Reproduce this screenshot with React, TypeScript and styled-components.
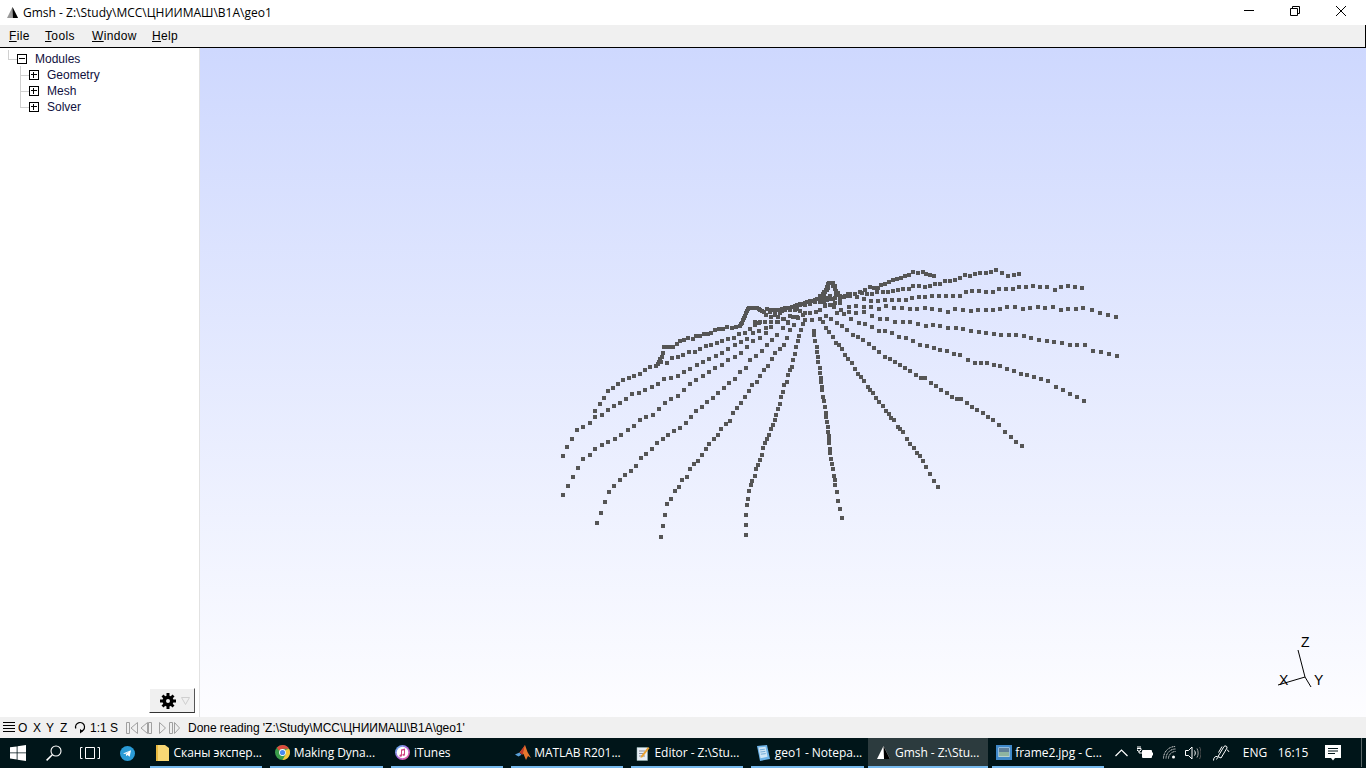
import styled, {createGlobalStyle} from "styled-components";
import type {ReactNode} from "react";

const GlobalStyle = createGlobalStyle`
    html, body {
        margin: 0;
        padding: 0;
        overflow: hidden;
    }
    * {
        box-sizing: border-box;
    }
`

const Page = styled.div`
    width: 1366px;
    height: 768px;
    display: flex;
    flex-direction: column;
    background: #fff;
    font-family: "Liberation Sans", Arial, sans-serif;
    font-size: 12px;
    color: #000;
`

const TitleBar = styled.div`
    height: 25px;
    flex: none;
    display: flex;
    align-items: center;
    padding-left: 7px;
    background: #fff;
`

const TitleText = styled.span`
    margin-left: 5px;
    font-family: "Open Sans", sans-serif;
    font-size: 12px;
    white-space: nowrap;
`

const WindowControls = styled.div`
    margin-left: auto;
    padding-right: 2px;
    display: flex;
`

const WindowButton = styled.div`
    width: 46px;
    height: 25px;
    display: flex;
    align-items: center;
    justify-content: center;
    padding-bottom: 4px;
`

const MenuBar = styled.div`
    height: 23px;
    flex: none;
    display: flex;
    align-items: center;
    padding: 0 0 1px 9px;
    background: #f0f0f0;
    border-bottom: 1px solid #000;
    border-right: 1px solid #000;
`

const MenuItem = styled.span<{ $width: number }>`
    width: ${p => p.$width}px;
    letter-spacing: 0.35px;
    u {
        text-underline-offset: 1px;
    }
`

const Main = styled.div`
    flex: 1;
    min-height: 0;
    display: flex;
`

const Sidebar = styled.aside`
    width: 200px;
    flex: none;
    display: flex;
    flex-direction: column;
    padding: 3px 4px 4px 0;
    background: #fff;
    border-right: 1px solid #e2e2e2;
`

const TreeRow = styled.div<{ $level: number }>`
    height: 16px;
    display: flex;
    align-items: center;
    padding-left: ${p => (p.$level === 0 ? 17 : 29)}px;
    color: #101040;
    white-space: nowrap;
`

const ToggleBox = styled.span<{ $elbow: number }>`
    position: relative;
    width: 10px;
    height: 10px;
    flex: none;
    margin-right: 8px;
    border: 1px solid #000;
    background: #fff;

    /* the dotted tree connector going into the box */
    &::before {
        content: "";
        position: absolute;
        right: 9px;
        bottom: 3px;
        width: 8px;
        height: ${p => p.$elbow}px;
        border-left: 1px solid #d0d0d0;
        border-bottom: 1px solid #d0d0d0;
    }
    &::after {
        content: "";
        position: absolute;
        left: 1px;
        top: 3px;
        width: 6px;
        height: 2px;
        border-top: 1px solid #000;
    }
`

const PlusBar = styled.span`
    position: absolute;
    left: 3px;
    top: 1px;
    height: 6px;
    border-left: 1px solid #000;
`

const GearButton = styled.button`
    width: 46px;
    height: 25px;
    margin-top: auto;
    align-self: flex-end;
    display: flex;
    align-items: center;
    padding: 0 0 0 10px;
    gap: 5px;
    background: #f0f0f0;
    border: none;
    border-top: 1px solid #fff;
    border-left: 1px solid #fff;
    border-right: 1px solid #555;
    border-bottom: 1px solid #333;
`

const Canvas = styled.div`
    position: relative;
    flex: 1;
    background: linear-gradient(180deg, #ced8fe 0%, #fdfdff 100%);
`

const Cloud = styled.svg`
    display: block;
    width: 100%;
    height: 100%;
`

const StatusBar = styled.div`
    height: 21px;
    flex: none;
    display: flex;
    align-items: center;
    padding-left: 3px;
    background: #f0f0f0;
`

const StatusCell = styled.span<{ $width: number }>`
    width: ${p => p.$width}px;
    flex: none;
    display: flex;
    align-items: center;
`

const StatusMessage = styled.span`
    margin-left: 6px;
    letter-spacing: -0.04px;
    white-space: nowrap;
`

const Taskbar = styled.div`
    height: 30px;
    flex: none;
    display: flex;
    align-items: stretch;
    background: #001519;
    color: #fff;
`

const TaskIcon = styled.div<{ $width: number }>`
    width: ${p => p.$width}px;
    flex: none;
    display: flex;
    align-items: center;
    justify-content: center;
`

const TaskButton = styled.div<{ $active?: boolean }>`
    position: relative;
    width: 120.25px;
    flex: none;
    display: flex;
    align-items: center;
    gap: 3.5px;
    padding: 0 0 1px 8px;
    background: ${p => (p.$active ? "#2c3b3e" : "transparent")};
    font-family: "Open Sans", sans-serif;
    font-size: 12px;
    letter-spacing: -0.05px;
    white-space: nowrap;

    &::after {
        content: "";
        position: absolute;
        left: ${p => (p.$active ? 0 : 4)}px;
        right: ${p => (p.$active ? 0 : 4)}px;
        bottom: 0;
        height: 2px;
        background: #76b9ed;
    }
`

const TaskGlyph = styled.span`
    width: 16px;
    flex: none;
    display: flex;
    justify-content: center;
`

const Tray = styled.div`
    margin-left: auto;
    display: flex;
    align-items: center;
    padding-bottom: 1px;
`

const TrayItem = styled.div<{ $width: number }>`
    width: ${p => p.$width}px;
    flex: none;
    display: flex;
    align-items: center;
    justify-content: center;
    font-family: "Open Sans", sans-serif;
    font-size: 12px;
`

const ShowDesktop = styled.div`
    width: 5px;
    height: 100%;
    flex: none;
    margin-left: 8px;
    border-left: 1px solid #5a6668;
`

// point cloud traced from the reference, one array per spoke, as x,y pairs in 3x crop coordinates
const leftCrop = {x: 550, y: 260}
const rightCrop = {x: 820, y: 260}

const leftSpokes: number[][] = [
    [39,588,51,561,66,537,81,510,99,501,120,489,135,471,135,453,150,432,162,414,174,393,189,384,204,372,219,360,237,354,252,348,270,342,285,330,300,321,318,318,324,312,333,306,330,297,339,279,345,261,357,261,369,261,381,252,390,243,402,240,414,234,429,237,438,228,450,228,462,222,474,222,483,219,495,210,507,207,519,207,531,201,546,204,558,201,570,198,576,189,582,174,588,159,594,147,603,144,621,144,630,150,642,156,651,147,663,150,675,153,690,150,705,144,720,144,735,138,750,132,765,129,780,123,795,120,810,114,822,102,831,90,834,72,846,69,855,87,864,102,876,111,894,102],
    [135,471,156,465,174,450,192,438,210,429,228,417,246,402,267,399,285,390,306,381,324,372,342,357,363,354,384,348,402,336,420,327,441,315,459,306,477,297,498,288,516,279,534,267,555,255,573,246,591,237,609,243,630,234,648,219,663,201,681,186,699,177],
    [39,705,54,678,69,651,84,624,99,597,120,585,135,567,156,555,174,546,195,537,213,525,234,510,252,498,270,480,288,471,309,465,327,447,345,429,363,417,384,408,402,390,420,372,438,360,459,348,477,336,495,324,516,315,534,300,555,291,573,279,591,261,609,219,627,213,648,204,663,186],
    [333,306,351,309,366,294,384,291,399,285,417,276,435,276,450,267,468,258,483,255,501,249,516,243,534,237,552,234,567,222,585,219,600,207,615,195,627,189,645,186,663,171],
    [141,789,153,759,165,726,177,696,192,678,210,660,225,645,243,633,258,618,273,594,288,582,306,567,321,549,339,537,354,525,372,513,390,504,408,489,423,471,438,453,456,441,471,426,489,414,504,399,522,384,537,369,555,357,570,336,588,324,600,300,618,288,636,273,651,255,666,240,681,225,699,204,714,189,729,171],
    [333,831,339,798,345,765,351,732,363,717,375,693,387,681,396,660,411,651,420,627,432,612,444,603,456,585,468,567,477,552,492,537,504,525,513,507,528,492,540,483,549,459,561,444,573,429,585,411,597,393,606,375,621,366,630,348,642,330,654,318,666,297,675,279,690,267,702,255,711,234,720,210,732,195,744,174],
    [588,825,588,795,588,765,591,735,594,717,597,693,603,675,606,663,615,648,618,627,624,615,630,600,636,585,639,564,645,549,651,537,657,525,663,507,669,495,675,480,678,465,684,447,690,432,693,411,699,396,702,375,711,366,714,345,720,330,726,321,729,300,735,282,738,261,744,243,747,228,753,210,759,192,765,180],
    [876,774,870,747,864,723,861,696,855,675,855,660,852,648,849,627,846,612,843,597,840,579,840,567,837,549,837,540,837,528,834,516,834,501,831,486,828,471,828,459,825,441,822,423,819,411,816,390,816,381,813,366,813,354,810,339,810,324,804,306,804,291,801,276,801,261,795,243,792,225,792,213,786,180],
    // the knot in the middle
    [735,138,741,147,750,153,765,159,780,159,798,156,810,150,825,138,840,135,855,129,870,120,885,108,660,156,675,156,690,159,684,171,684,186,702,177,714,186,720,168,741,171,759,165,648,165,630,186,615,186,720,150,735,150,750,135,765,135,780,132,795,126,810,126,825,120,840,117,855,114,675,165,696,153,705,150],
    // the thick ridge, points so close that they join up
    [573,192,579,180,585,168,591,153,597,144,612,144,627,147,636,153,669,150,682,150,697,147,712,144,727,141,742,135,757,132,772,126,787,122,802,117,816,108,826,96,832,81,840,69,849,78,858,93,870,108,885,108,342,261,351,261,363,261,327,306,336,291],
]

const rightSpokes: number[][] = [
    [354,681,342,663,330,642,318,621,309,603,300,588,291,579,282,564,270,552,261,537,249,516,240,507,234,501,222,480,213,474,207,462,198,453,189,438,177,426,168,414,159,399,150,390,144,381,132,363,123,351,114,342,105,327,96,309,84,297,75,285,66,267,57,255,48,249,39,231,27,216,18,204,9,186,0,177],
    [606,558,588,546,573,531,555,516,537,495,519,480,504,471,489,459,471,450,456,441,441,429,423,417,411,417,396,411,381,399,363,390,348,378,333,369,315,354,303,354,288,345,270,333,255,324,240,315,225,306,210,297,195,291,177,276,162,264,147,252,129,240,114,231,99,225,81,210,66,198,51,189,33,177,18,168],
    [792,423,771,411,750,402,729,390,708,381,684,363,663,357,642,351,621,345,603,342,582,333,561,327,540,318,522,315,501,309,483,309,465,309,444,300,420,285,402,282,381,273,360,270,342,264,321,258,300,255,279,243,258,234,237,231,216,219,195,213,177,213,156,201,135,192,117,189,93,177,72,162,51,159],
    [891,288,867,282,843,276,819,273,795,255,771,255,750,255,726,249,702,246,681,243,657,240,633,234,612,228,588,225,567,225,543,225,522,222,498,219,477,216,453,213,429,207,408,204,384,204,360,198,339,195,318,198,294,192,270,186,249,186,225,186,201,177,180,177,156,168,132,156,108,159,87,156,63,150,42,141],
    [888,171,864,165,840,159,816,150,789,144,768,147,744,147,723,150,699,141,675,144,654,141,630,144,609,147,585,141,561,141,540,147,519,150,498,150,474,150,453,153,429,150,405,147,384,156,360,150,336,147,315,144,291,147,270,147,246,144,222,144,198,138,177,147,153,141,132,141,108,138,87,141,60,129,39,135],
    [786,84,765,81,744,78,723,81,705,90,681,81,660,81,639,78,618,81,597,81,579,87,558,87,537,87,519,96,498,96,477,93,456,93,438,96,420,108,399,108,378,108,357,108,336,108,315,111,297,111,276,114,258,120,237,120,216,120,195,120,174,123,153,123,132,117,111,111,90,108],
    [597,42,582,45,564,48,546,39,528,30,513,36,498,39,480,39,465,42,450,48,435,45,420,54,405,60,390,63,375,63,360,72,345,72,330,78,315,81,297,78,279,78,267,87,249,87,234,90,219,93,204,96,189,96,171,96,156,102,141,102,126,99],
    [342,48,330,45,318,42,309,36,294,39,279,36,267,45,255,48,243,54,231,57,219,60,207,66,195,72,183,75,174,84,162,84,150,81,135,90,120,96,105,102,90,102,72,111,54,99,45,78,39,69,27,69,18,90,9,102,0,108,0,120,20,120,40,118,60,114,80,108,15,135,30,135,12,126,12,96,24,84,30,69,48,105,60,108,30,108,20,114,10,114],
]

const toPoints = (spokes: number[][], crop: { x: number, y: number }) =>
    spokes.flatMap(spoke => {
        const points = [];
        for (let i = 0; i < spoke.length; i += 2) {
            points.push([Math.round(spoke[i] / 3) + crop.x, Math.round(spoke[i + 1] / 3) + crop.y]);
        }
        return points;
    })

const cloudPoints = [...toPoints(leftSpokes, leftCrop), ...toPoints(rightSpokes, rightCrop)]

const GmshLogo = ({size = 11, light = "#9a9a9a", dark = "#000"}: { size?: number, light?: string, dark?: string }) => (
    <svg width={size} height={size} viewBox="0 0 12 12">
        <polygon points="6,0 12,12 0,12" fill={light}/>
        <polygon points="6,0 12,12 6.5,12" fill={dark}/>
    </svg>
)

const GearIcon = () => (
    <svg width="16" height="16" viewBox="0 0 16 16" fill="#000">
        <path d="M6.5 0h3v3h-3zM6.5 13h3v3h-3zM0 6.500h3v3H0zM13 6.500h3v3h-3zM1.500 3.500l2-2 2.500 2.500-2 2zM10 4l2.500-2.500 2 2-2.500 2.500zM1.500 12.500l2.500-2.500 2 2-2.500 2.500zM10 12l2-2 2.500 2.500-2 2z"/>
        <path fillRule="evenodd" d="M8 2.500a5.500 5.500 0 1 1 0 11 5.500 5.500 0 0 1 0-11zM8 6a2 2 0 1 0 0 4 2 2 0 0 0 0-4z"/>
    </svg>
)

const HamburgerIcon = () => (
    <svg width="12" height="11" viewBox="0 0 12 11" stroke="#000">
        <path d="M0 .5h12M0 3.500h12M0 6.500h12M0 9.500h12"/>
    </svg>
)

const RotateIcon = () => (
    <svg width="12" height="13" viewBox="0 0 12 13" fill="none" stroke="#000" strokeWidth="1.2">
        <path d="M6 10.500a4.500 4.500 0 1 0-4.200-3"/>
        <path d="M6 8v4.500l3-2.200z" fill="#000" stroke="none"/>
    </svg>
)

const NavIcons = () => (
    <svg width="54" height="14" viewBox="0 0 54 14" fill="none" stroke="#a0a0a0">
        <path d="M.5 1.500h3v11h-3zM11.500 1.500v11l-6.500-5.500z"/>
        <path d="M21.500 1.500v11l-6.500-5.500zM22.500 1.500h3v11h-3z"/>
        <path d="M33.500 1.500v11l6-5.500z"/>
        <path d="M43.500 1.500h3v11h-3zM48.500 1.500v11l5-5.500z"/>
    </svg>
)

const WindowsLogo = () => (
    <svg width="16" height="16" viewBox="0 0 16 16" fill="#fff">
        <path d="M0 2.300l6.700-.9v6.100H0zM7.500 1.300L16 0v7.500H7.500zM0 8.300h6.700v6.200L0 13.600zM7.500 8.300H16V16l-8.500-1.200z"/>
    </svg>
)

const SearchIcon = () => (
    <svg width="16" height="16" viewBox="0 0 16 16" fill="none" stroke="#fff" strokeWidth="1.1">
        <circle cx="10" cy="6" r="5"/>
        <path d="M6.300 9.700L.6 15.400" strokeWidth="1.500"/>
    </svg>
)

const TaskViewIcon = () => (
    <svg width="20" height="12" viewBox="0 0 20 12" fill="none" stroke="#fff">
        <path d="M5.500.5h9v11h-9zM2.500.5h-2v11h2M17.500.5h2v11h-2"/>
    </svg>
)

const TelegramIcon = () => (
    <svg width="15" height="15" viewBox="0 0 15 15">
        <circle cx="7.500" cy="7.500" r="7.500" fill="#2a9bd6"/>
        <path d="M3 7.400l8-3.100-1.300 6.500-2.300-1.700-1.200 1.200-.3-2.200 3.300-2.700-4.100 2.500z" fill="#fff"/>
    </svg>
)

const FolderIcon = () => (
    <svg width="13" height="16" viewBox="0 0 13 16">
        <path d="M0 0h9l4 3v13H0z" fill="#f7d774"/>
        <path d="M0 0h2v16H0z" fill="#e8b93f"/>
    </svg>
)

const ChromeIcon = () => (
    <svg width="15" height="15" viewBox="0 0 15 15">
        <circle cx="7.500" cy="7.500" r="7.500" fill="#3a9d4a"/>
        <path d="M7.500 0a7.500 7.500 0 0 1 6.500 3.750H7.500L3.800 5.500 1.900 2.600A7.500 7.500 0 0 1 7.500 0z" fill="#dd4b3e"/>
        <path d="M14 3.750A7.500 7.500 0 0 1 7.500 15l3-5.200V5z" fill="#f5c63c"/>
        <circle cx="7.500" cy="7.500" r="3.400" fill="#fff"/>
        <circle cx="7.500" cy="7.500" r="2.600" fill="#4a8af0"/>
    </svg>
)

const ItunesIcon = () => (
    <svg width="15" height="15" viewBox="0 0 15 15">
        <defs>
            <linearGradient id="itunesRing" x1="0" y1="0" x2="1" y2="1">
                <stop offset="0" stopColor="#4cc0f0"/>
                <stop offset=".5" stopColor="#b06be0"/>
                <stop offset="1" stopColor="#f0508a"/>
            </linearGradient>
        </defs>
        <circle cx="7.500" cy="7.500" r="7.500" fill="url(#itunesRing)"/>
        <circle cx="7.500" cy="7.500" r="5.800" fill="#fff"/>
        <path d="M6 4.500l4-1v6.300a1.300 1.100 0 1 1-1-1.100V5.200l-2 .5v5a1.300 1.100 0 1 1-1-1.100z" fill="#d0457f"/>
    </svg>
)

const MatlabIcon = () => (
    <svg width="16" height="16" viewBox="0 0 16 16">
        <path d="M0 9.500l4.500-2 2 2.200-3 1.800z" fill="#5aa0d8"/>
        <path d="M4.500 7.500L8 3l2-3 2.500 7 3.500 6-3-2-2 4-2.500-6z" fill="#e8772e"/>
        <path d="M8 3L4.500 7.500l3 2.500L10 0z" fill="#c0392b"/>
    </svg>
)

const EditorIcon = () => (
    <svg width="14" height="16" viewBox="0 0 14 16">
        <path d="M1 2.500h10.500v13H1z" fill="#e8eef5" stroke="#9bb" strokeWidth=".5"/>
        <path d="M3 6h6M3 8.500h5M3 11h6" stroke="#778" strokeWidth=".8"/>
        <path d="M5 11l7-9 1.500 1.200-7 9-2 .6z" fill="#e8a030"/>
    </svg>
)

const NotepadIcon = () => (
    <svg width="13" height="16" viewBox="0 0 13 16">
        <path d="M0 1l10-1 3 14-10 2z" fill="#6db3e8"/>
        <path d="M1.500 2.500l7-.7 2 10-7 1.500z" fill="#cfe6f7"/>
        <path d="M2.800 4.800l5-.6M3.300 7l5-.6M3.800 9.200l5-.6" stroke="#4a90c8" strokeWidth=".7"/>
    </svg>
)

const PictureIcon = () => (
    <svg width="16" height="15" viewBox="0 0 16 15">
        <path d="M0 0h16v15H0z" fill="#3f88c8"/>
        <path d="M2.500 2.500h11v9.500h-11z" fill="#e4eef5"/>
        <path d="M3 3h10v4H3z" fill="#5f7f98"/>
        <path d="M3 7h10v4.500H3z" fill="#8fb4a0"/>
    </svg>
)

const ChevronIcon = () => (
    <svg width="13" height="8" viewBox="0 0 13 8" fill="none" stroke="#fff" strokeWidth="1.200">
        <path d="M.5 7l6-6 6 6"/>
    </svg>
)

const BatteryIcon = () => (
    <svg width="16" height="13" viewBox="0 0 16 13" fill="none" stroke="#fff">
        <path d="M5.500 4.500h9v7h-9zM15.500 6.500v3"/>
        <path d="M6 5h8v6H6z" fill="#fff" stroke="none"/>
        <path d="M1 0v2.500M3 0v2.500M0 2.500h4V4l-1 1H1L0 4zM2 5v2h3.500"/>
    </svg>
)

const WifiIcon = () => (
    <svg width="13" height="13" viewBox="0 0 13 13" fill="none" stroke="#ccc" strokeDasharray="1.200 .5">
        <path d="M.5 12.500C.5 6 5.500 .5 12.500 .5"/>
        <path d="M3 12.500c0-5 4-9.500 9.500-9.500"/>
        <path d="M5.500 12.500c0-3.500 3-7 7-7"/>
        <circle cx="10.500" cy="11" r="1.500" fill="#fff" stroke="none"/>
    </svg>
)

const VolumeIcon = () => (
    <svg width="16" height="14" viewBox="0 0 16 14" fill="none" stroke="#fff">
        <path d="M.5 4.500h3l3.500-3.500v12l-3.500-3.500h-3z"/>
        <path d="M9.500 4.500c1 1.500 1 3.500 0 5"/>
        <path d="M12 2.500c1.500 2.500 1.500 6.500 0 9" stroke="#aaa"/>
        <path d="M14.500 1c2 3.500 2 8.500 0 12" stroke="#555"/>
    </svg>
)

const PenIcon = () => (
    <svg width="17" height="16" viewBox="0 0 17 16" fill="none" stroke="#fff">
        <path d="M5 11.500L11 1.500c1-1.200 3.500-.5 3 1.500L8 13z"/>
        <path d="M9 1.500l-3.500 6M14 5c1.500.5 2 1 1.500 2"/>
        <path d="M.5 15.500c0-3 2-4.500 3.500-4 2 .5 0 3-1 2.500"/>
    </svg>
)

const NotificationIcon = () => (
    <svg width="16" height="16" viewBox="0 0 16 16">
        <path d="M0 0h16v13H10l-2 2.500L6 13H0z" fill="#fff"/>
        <path d="M3 3.500h10M3 6h10M3 8.500h7" stroke="#001519"/>
    </svg>
)

const TASKS: { icon: ReactNode, label: string, active?: boolean }[] = [
    {icon: <FolderIcon/>, label: "Сканы экспер..."},
    {icon: <ChromeIcon/>, label: "Making Dyna..."},
    {icon: <ItunesIcon/>, label: "iTunes"},
    {icon: <MatlabIcon/>, label: "MATLAB R201..."},
    {icon: <EditorIcon/>, label: "Editor - Z:\\Stu..."},
    {icon: <NotepadIcon/>, label: "geo1 - Notepa..."},
    {icon: <GmshLogo size={13} light="#fff"/>, label: "Gmsh - Z:\\Stu...", active: true},
    {icon: <PictureIcon/>, label: "frame2.jpg - C..."},
]

const MODULES = ["Geometry", "Mesh", "Solver"]

const App = () => (
    <Page>
        <GlobalStyle/>
        <TitleBar>
            <GmshLogo/>
            <TitleText>Gmsh - Z:\Study\MCC\ЦНИИМАШ\B1A\geo1</TitleText>
            <WindowControls>
                <WindowButton>
                    <svg width="10" height="1" viewBox="0 0 10 1"><path d="M0 .5h10" stroke="#000"/></svg>
                </WindowButton>
                <WindowButton>
                    <svg width="10" height="10" viewBox="0 0 10 10" fill="none" stroke="#000">
                        <path d="M.5 2.500h7v7h-7zM2.500 2.500v-2h7v7h-2"/>
                    </svg>
                </WindowButton>
                <WindowButton>
                    <svg width="10" height="10" viewBox="0 0 10 10" stroke="#000"><path d="M0 0l10 10M10 0L0 10"/></svg>
                </WindowButton>
            </WindowControls>
        </TitleBar>
        <MenuBar>
            <MenuItem $width={36}><u>F</u>ile</MenuItem>
            <MenuItem $width={47}><u>T</u>ools</MenuItem>
            <MenuItem $width={60}><u>W</u>indow</MenuItem>
            <MenuItem $width={40}><u>H</u>elp</MenuItem>
        </MenuBar>
        <Main>
            <Sidebar>
                <TreeRow $level={0}>
                    <ToggleBox $elbow={9}/>
                    Modules
                </TreeRow>
                {MODULES.map((name, i) => (
                    <TreeRow key={name} $level={1}>
                        <ToggleBox $elbow={i === 0 ? 9 : 16}><PlusBar/></ToggleBox>
                        {name}
                    </TreeRow>
                ))}
                <GearButton>
                    <GearIcon/>
                    <svg width="9" height="8" viewBox="0 0 9 8" fill="none" stroke="#cfcfcf">
                        <path d="M.5.500h8L4.500 7.500z"/>
                    </svg>
                </GearButton>
            </Sidebar>
            <Canvas>
                <Cloud viewBox="200 48 1166 669">
                    {cloudPoints.map(([x, y], i) => (
                        <rect key={i} x={x - 2} y={y - 2} width="4" height="4" fill="#555"/>
                    ))}
                    <path d="M1298 650l7 27M1305 677l-27 8M1305 677l6 10" stroke="#000" fill="none"/>
                    <text x="1301" y="647" fontFamily="Liberation Sans" fontSize="14">Z</text>
                    <text x="1279" y="685" fontFamily="Liberation Sans" fontSize="14">X</text>
                    <text x="1314" y="685" fontFamily="Liberation Sans" fontSize="14">Y</text>
                </Cloud>
            </Canvas>
        </Main>
        <StatusBar>
            <StatusCell $width={15}><HamburgerIcon/></StatusCell>
            <StatusCell $width={15}>O</StatusCell>
            <StatusCell $width={13}>X</StatusCell>
            <StatusCell $width={14}>Y</StatusCell>
            <StatusCell $width={14}>Z</StatusCell>
            <StatusCell $width={16}><RotateIcon/></StatusCell>
            <StatusCell $width={20}>1:1</StatusCell>
            <StatusCell $width={16}>S</StatusCell>
            <StatusCell $width={56}><NavIcons/></StatusCell>
            <StatusMessage>Done reading 'Z:\Study\MCC\ЦНИИМАШ\B1A\geo1'</StatusMessage>
        </StatusBar>
        <Taskbar>
            <TaskIcon $width={36}><WindowsLogo/></TaskIcon>
            <TaskIcon $width={36}><SearchIcon/></TaskIcon>
            <TaskIcon $width={36}><TaskViewIcon/></TaskIcon>
            <TaskIcon $width={38}><TelegramIcon/></TaskIcon>
            {TASKS.map(task => (
                <TaskButton key={task.label} $active={task.active}>
                    <TaskGlyph>{task.icon}</TaskGlyph>
                    {task.label}
                </TaskButton>
            ))}
            <Tray>
                <TrayItem $width={24}><ChevronIcon/></TrayItem>
                <TrayItem $width={24}><BatteryIcon/></TrayItem>
                <TrayItem $width={24}><WifiIcon/></TrayItem>
                <TrayItem $width={24}><VolumeIcon/></TrayItem>
                <TrayItem $width={32}><PenIcon/></TrayItem>
                <TrayItem $width={36}>ENG</TrayItem>
                <TrayItem $width={40}>16:15</TrayItem>
                <TrayItem $width={40}><NotificationIcon/></TrayItem>
                <ShowDesktop/>
            </Tray>
        </Taskbar>
    </Page>
)

export default App
